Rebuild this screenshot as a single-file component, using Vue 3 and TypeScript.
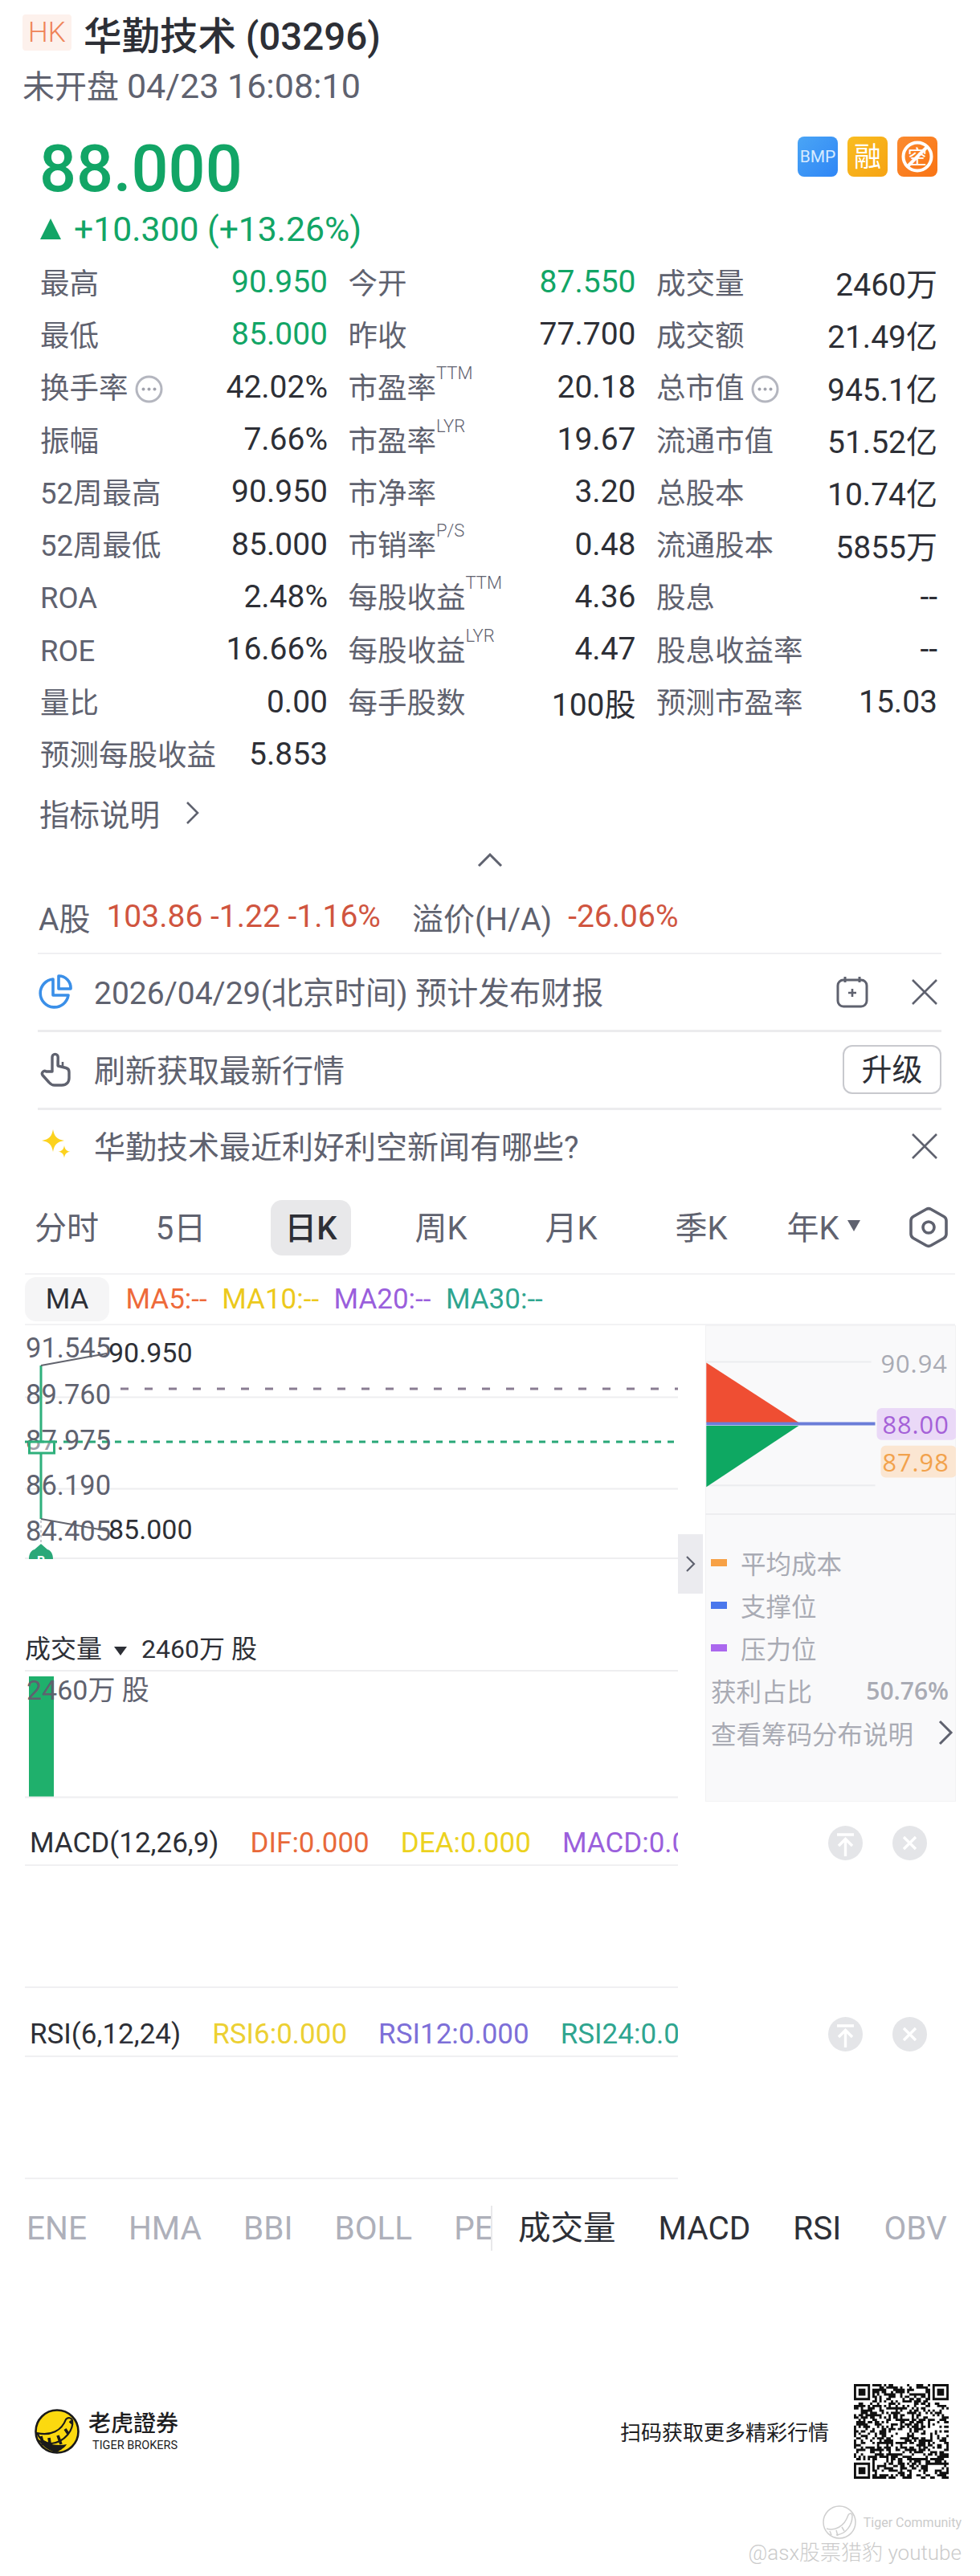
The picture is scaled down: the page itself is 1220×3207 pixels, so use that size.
<script setup lang="ts">
interface Cell {
  label: string;
  value: string;
  sup?: string;
  more?: boolean;
  tone?: 'up';
}

const cells: Cell[] = [
  { label: '最高', value: '90.950', tone: 'up' },
  { label: '今开', value: '87.550', tone: 'up' },
  { label: '成交量', value: '2460万' },
  { label: '最低', value: '85.000', tone: 'up' },
  { label: '昨收', value: '77.700' },
  { label: '成交额', value: '21.49亿' },
  { label: '换手率', value: '42.02%', more: true },
  { label: '市盈率', value: '20.18', sup: 'TTM' },
  { label: '总市值', value: '945.1亿', more: true },
  { label: '振幅', value: '7.66%' },
  { label: '市盈率', value: '19.67', sup: 'LYR' },
  { label: '流通市值', value: '51.52亿' },
  { label: '52周最高', value: '90.950' },
  { label: '市净率', value: '3.20' },
  { label: '总股本', value: '10.74亿' },
  { label: '52周最低', value: '85.000' },
  { label: '市销率', value: '0.48', sup: 'P/S' },
  { label: '流通股本', value: '5855万' },
  { label: 'ROA', value: '2.48%' },
  { label: '每股收益', value: '4.36', sup: 'TTM' },
  { label: '股息', value: '--' },
  { label: 'ROE', value: '16.66%' },
  { label: '每股收益', value: '4.47', sup: 'LYR' },
  { label: '股息收益率', value: '--' },
  { label: '量比', value: '0.00' },
  { label: '每手股数', value: '100股' },
  { label: '预测市盈率', value: '15.03' },
  { label: '预测每股收益', value: '5.853' },
];

const periods = ['分时', '5日', '日K', '周K', '月K', '季K'];
const maItems = [
  { text: 'MA5:--', color: '#ee6a3a' },
  { text: 'MA10:--', color: '#ecc91c' },
  { text: 'MA20:--', color: '#9a5fdc' },
  { text: 'MA30:--', color: '#2fa58f' },
];
const axis = [
  { text: '91.545', y: 1677 },
  { text: '89.760', y: 1735 },
  { text: '87.975', y: 1792 },
  { text: '86.190', y: 1848 },
  { text: '84.405', y: 1905 },
];
const legend = [
  { text: '平均成本', color: '#f7a145' },
  { text: '支撑位', color: '#4a78ec' },
  { text: '压力位', color: '#ab68ee' },
];
const indicators = [
  {
    name: 'MACD(12,26,9)',
    items: [
      { text: 'DIF:0.000', color: '#e8693a' },
      { text: 'DEA:0.000', color: '#ecd21f' },
      { text: 'MACD:0.000', color: '#9a5fdc' },
    ],
  },
  {
    name: 'RSI(6,12,24)',
    items: [
      { text: 'RSI6:0.000', color: '#ecd033' },
      { text: 'RSI12:0.000', color: '#7d6fd8' },
      { text: 'RSI24:0.000', color: '#2fa58f' },
    ],
  },
];
const moreTabs = ['ENE', 'HMA', 'BBI', 'BOLL', 'PE'];

// the QR only has to look like one, so modules come from a small LFSR
function buildQr(): string {
  const size = 41;
  let seed = 0x5a3c;
  let d = '';
  const inFinder = (x: number, y: number) =>
    (x < 8 && y < 8) || (x >= size - 8 && y < 8) || (x < 8 && y >= size - 8);
  for (let y = 0; y < size; y++) {
    for (let x = 0; x < size; x++) {
      seed = ((seed >> 1) ^ (seed & 1 ? 0xb400 : 0)) & 0xffff;
      if (!inFinder(x, y) && seed % 100 < 52) d += `M${x} ${y}h1v1h-1z`;
    }
  }
  for (const [fx, fy] of [[0, 0], [size - 7, 0], [0, size - 7]]) {
    d += `M${fx} ${fy}h7v7h-7zM${fx + 1} ${fy + 1}v5h5v-5zM${fx + 2} ${fy + 2}h3v3h-3z`;
  }
  return d;
}
const qrPath = buildQr();
</script>

<template>
  <div class="page">
    <header class="head">
      <div class="title-row">
        <span class="market">HK</span>
        <h1 class="name">华勤技术 (03296)</h1>
      </div>
      <div class="status">未开盘 <span class="status-time">04/23 16:08:10</span></div>
    </header>

    <section class="quote">
      <div class="price-row">
        <span class="price">88.000</span>
        <div class="badges">
          <span class="badge badge-blue">BMP</span>
          <span class="badge badge-yellow">融</span>
          <span class="badge badge-orange">
            <svg viewBox="0 0 50 50" width="50" height="50">
              <text x="25" y="34" text-anchor="middle" font-size="24" fill="#fff">空</text>
              <circle cx="25" cy="25" r="17.5" fill="none" stroke="#fff" stroke-width="4" />
              <path d="M13 37 37 13" stroke="#fff" stroke-width="4" />
            </svg>
          </span>
        </div>
      </div>
      <div class="change"><i class="up-arrow"></i>+10.300 (+13.26%)</div>
    </section>

    <section class="stats">
      <div v-for="(c, i) in cells" :key="i" class="cell">
        <span class="cell-label">
          {{ c.label }}<sup v-if="c.sup">{{ c.sup }}</sup>
          <svg v-if="c.more" class="more" viewBox="0 0 35 35" width="35" height="35">
            <circle cx="17.5" cy="17.5" r="15.5" fill="none" stroke="#b4b6bf" stroke-width="3" />
            <circle cx="10.5" cy="17.5" r="2" fill="#a0a2ac" />
            <circle cx="17.5" cy="17.5" r="2" fill="#a0a2ac" />
            <circle cx="24.5" cy="17.5" r="2" fill="#a0a2ac" />
          </svg>
        </span>
        <span class="cell-value" :class="{ up: c.tone === 'up' }">{{ c.value }}</span>
      </div>
    </section>

    <div class="explain">
      指标说明
      <svg viewBox="0 0 18 30" width="18" height="30">
        <path d="M2 2l13 13L2 28" fill="none" stroke="#5f626f" stroke-width="2.6" />
      </svg>
    </div>
    <div class="fold">
      <svg viewBox="0 0 32 18" width="32" height="18">
        <path d="M2 16 16 2l14 14" fill="none" stroke="#5f626f" stroke-width="3" />
      </svg>
    </div>

    <div class="ah">
      <span class="ah-label">A股</span>
      <span class="ah-num">103.86 -1.22 -1.16%</span>
      <span class="ah-label ah-prem">溢价(H/A)</span>
      <span class="ah-num">-26.06%</span>
    </div>

    <div class="notices">
      <div class="notice">
        <svg class="n-icon" viewBox="0 0 42 43" width="42" height="43">
          <path d="M18 6A17.5 17.5 0 1 0 37 26H18z" fill="none" stroke="#3a8fe8" stroke-width="3.6" stroke-linejoin="round" />
          <path d="M25 2a15 15 0 0 1 15 16H25z" fill="none" stroke="#3a8fe8" stroke-width="3.6" stroke-linejoin="round" />
        </svg>
        <span class="n-text">2026/04/29(北京时间) 预计发布财报</span>
        <svg class="n-cal" viewBox="0 0 40 40" width="40" height="40">
          <rect x="2" y="5" width="36" height="33" rx="7" fill="none" stroke="#5f626f" stroke-width="3" />
          <path d="M11 1v7M29 1v7" stroke="#5f626f" stroke-width="3" />
          <path d="M20 16v10M15 21h10" stroke="#5f626f" stroke-width="2.6" />
        </svg>
        <svg class="n-close" viewBox="0 0 32 32" width="32" height="32">
          <path d="M1 1l30 30M31 1 1 31" stroke="#5f626f" stroke-width="2.6" />
        </svg>
      </div>
      <div class="notice">
        <svg class="n-icon" viewBox="0 0 42 43" width="42" height="43">
          <path
            d="M17 24V6a3.6 3.6 0 0 1 7.2 0v11l10 2.5c2.500.7 3.800 2.600 3.800 5V32c0 5.500-3.500 9-9 9h-9c-3 0-5-1-7-3.500L5 28.500c-2-3 1.500-6.500 4.500-4.500z"
            fill="none"
            stroke="#5f626f"
            stroke-width="3.4"
            stroke-linejoin="round"
          />
          <path d="M24 10v7M30 12v6" stroke="#5f626f" stroke-width="2.6" />
        </svg>
        <span class="n-text">刷新获取最新行情</span>
        <button class="upgrade">升级</button>
      </div>
      <div class="notice notice-last">
        <svg class="n-icon" viewBox="0 0 42 43" width="42" height="43">
          <path d="M18 1c1.500 9 5 12.500 14 14-9 1.500-12.500 5-14 14-1.500-9-5-12.500-14-14 9-1.500 12.500-5 14-14z" fill="#fcd21e" />
          <path d="M32 21c.8 5 2.800 7 7.500 7.800-4.700.8-6.700 2.800-7.500 7.700-.8-4.900-2.800-6.900-7.500-7.700 4.700-.8 6.700-2.800 7.500-7.800z" fill="#fcd21e" />
        </svg>
        <span class="n-text">华勤技术最近利好利空新闻有哪些?</span>
        <svg class="n-close" viewBox="0 0 32 32" width="32" height="32">
          <path d="M1 1l30 30M31 1 1 31" stroke="#5f626f" stroke-width="2.6" />
        </svg>
      </div>
    </div>

    <nav class="periods">
      <span v-for="p in periods" :key="p" class="period" :class="{ active: p === '日K' }">{{ p }}</span>
      <span class="period period-year">年K<i class="caret"></i></span>
      <svg class="gear" viewBox="0 0 50 52" width="50" height="52">
        <path
          d="M22 3.500a6 6 0 0 1 6 0l16 9a6 6 0 0 1 3 5.200v16.600a6 6 0 0 1-3 5.200l-16 9a6 6 0 0 1-6 0l-16-9a6 6 0 0 1-3-5.200V17.700a6 6 0 0 1 3-5.200z"
          fill="none"
          stroke="#5f626f"
          stroke-width="3.6"
        />
        <circle cx="25" cy="26" r="7" fill="none" stroke="#5f626f" stroke-width="3.6" />
      </svg>
    </nav>

    <div class="ma-bar">
      <span class="ma-pill">MA</span>
      <span v-for="m in maItems" :key="m.text" :style="{ color: m.color }">{{ m.text }}</span>
    </div>

    <section class="chart-area">
      <div class="chart-main">
        <svg class="kline" viewBox="31 1649 813 291" width="813" height="291">
          <path d="M31 1738.500h813M31 1852.500h813M31 1939h813" stroke="#eeeef0" stroke-width="2" />
          <path d="M150 1728H844" stroke="#8a7d92" stroke-width="3" stroke-dasharray="10 20" />
          <path d="M31 1794H844" stroke="#2aa878" stroke-width="3" stroke-dasharray="8 8" />
          <text v-for="a in axis" :key="a.text" x="32" :y="a.y" class="axis-text">{{ a.text }}</text>
          <path d="M51 1699V1793M51 1809V1890" stroke="#2fb07c" stroke-width="3" fill="none" />
          <rect x="36.500" y="1794" width="31" height="14" fill="#fff" fill-opacity="0.4" stroke="#2fb07c" stroke-width="3" />
          <path d="M51 1699l82-15M51 1890l84 15" stroke="#62646e" stroke-width="2" fill="none" />
          <text x="135" y="1683" class="mark-text">90.950</text>
          <text x="135" y="1903" class="mark-text">85.000</text>
          <path d="M51 1892v28" stroke="#b9bbc2" stroke-width="1.500" stroke-dasharray="3 3" />
          <path d="M51 1921l8 7c4 1 7 5 7 12H36c0-7 3-11 7-12z" fill="#2aa878" />
          <text x="51" y="1948" text-anchor="middle" font-size="16" font-weight="700" fill="#fff">B</text>
        </svg>
        <div class="vol-head">
          成交量<i class="vol-caret"></i><span>2460万 股</span>
        </div>
        <svg class="vol" viewBox="31 2080 813 158" width="813" height="158">
          <rect x="36" y="2086" width="31" height="151" fill="#1fb06c" />
          <path d="M31 2236.500h813" stroke="#eeeef0" stroke-width="2" />
          <text x="33" y="2103" class="vol-text">2460万 股</text>
        </svg>
      </div>

      <aside class="panel">
        <svg class="cost" viewBox="878 1649 312 236" width="312" height="236">
          <path d="M878 1695h207M878 1850h212" stroke="#ecedef" stroke-width="2" />
          <path d="M878 1696v75h116z" fill="#ef4e33" />
          <path d="M878 1775v77l116-77z" fill="#0ea862" />
          <path d="M878 1772.500H1090" stroke="#6b7dd8" stroke-width="4" />
          <text x="1097" y="1696" class="cost-text" fill="#a9abb4">90.94</text>
          <rect x="1092" y="1753" width="100" height="40" rx="6" fill="#ead9f7" />
          <text x="1183" y="1773" text-anchor="end" class="cost-text" fill="#a561d8">88.00</text>
          <rect x="1097" y="1800" width="95" height="40" rx="6" fill="#fbe6d2" />
          <text x="1183" y="1820" text-anchor="end" class="cost-text" fill="#f2a24c">87.98</text>
        </svg>
        <div class="panel-body">
          <div v-for="l in legend" :key="l.text" class="legend-row">
            <i :style="{ background: l.color }"></i>{{ l.text }}
          </div>
          <div class="profit"><span>获利占比</span><b>50.76%</b></div>
          <div class="panel-link">
            查看筹码分布说明
            <svg viewBox="0 0 19 32" width="19" height="32">
              <path d="M2 2l14 14L2 30" fill="none" stroke="#5f626f" stroke-width="3" />
            </svg>
          </div>
        </div>
      </aside>

      <div class="panel-toggle">
        <svg viewBox="0 0 14 22" width="14" height="22">
          <path d="M2 2l9 9-9 9" fill="none" stroke="#5f626f" stroke-width="2.2" />
        </svg>
      </div>
    </section>

    <section v-for="ind in indicators" :key="ind.name" class="indicator">
      <div class="ind-pane">
        <div class="ind-head">
          <span class="ind-name">{{ ind.name }}</span>
          <span v-for="it in ind.items" :key="it.text" :style="{ color: it.color }">{{ it.text }}</span>
        </div>
      </div>
      <div class="ind-actions">
        <svg viewBox="0 0 43 43" width="43" height="43">
          <circle cx="21.500" cy="21.500" r="21.500" fill="#e4e5e8" />
          <path d="M11 11h21M21.500 38V17M13 25l8.500-8.500L30 25" fill="none" stroke="#fff" stroke-width="3.400" />
        </svg>
        <svg viewBox="0 0 43 43" width="43" height="43">
          <circle cx="21.500" cy="21.500" r="21.500" fill="#e4e5e8" />
          <path d="M14 14l15 15M29 14 14 29" stroke="#fff" stroke-width="3.400" />
        </svg>
      </div>
    </section>

    <div class="bottom-tabs">
      <div class="more-tabs">
        <span v-for="t in moreTabs" :key="t">{{ t }}</span>
      </div>
      <div class="main-tabs">
        <span class="on">成交量</span>
        <span class="on">MACD</span>
        <span class="on">RSI</span>
        <span>OBV</span>
      </div>
    </div>

    <footer class="foot">
      <div class="brand">
        <svg viewBox="0 0 56 56" width="56" height="56">
          <circle cx="28" cy="28" r="26.500" fill="#fbd90f" stroke="#1a1a1a" stroke-width="2.600" />
          <path d="M3 37c6 8 14 16 25 17 6-4 10-6 12-10-12 3-26-1-37-7z" fill="#1a1a1a" />
          <path d="M3 30c17 4 31-3 36-17 3-3 7-2 8 1 2 12-9 27-26 29-7 0-13-3-18-13z" fill="#fbd90f" stroke="#1a1a1a" stroke-width="2.200" />
          <path d="M8 34l3 11M18 36l2 13M29 33l4 11M38 25l4 6M44 15l3 3" stroke="#1a1a1a" stroke-width="3.600" />
        </svg>
        <div class="brand-text">
          <span class="brand-cn">老虎證券</span>
          <span class="brand-en">TIGER BROKERS</span>
        </div>
      </div>
      <div class="scan">
        <span>扫码获取更多精彩行情</span>
        <svg viewBox="0 0 41 41" width="120" height="118">
          <path :d="qrPath" fill="#111" fill-rule="evenodd" />
        </svg>
      </div>
    </footer>

    <div class="watermark">
      <div class="wm-top">
        <svg viewBox="0 0 44 44" width="44" height="44">
          <circle cx="22" cy="22" r="20" fill="none" stroke="#cfcfcf" stroke-width="1.500" />
          <path d="M6 30c10 3 22-2 27-17 2-3 5-2 5 1 0 12-8 23-20 24" fill="none" stroke="#cfcfcf" stroke-width="1.500" />
          <path d="M10 33l2 5M18 32l2 7M25 28l3 5" stroke="#cfcfcf" stroke-width="1.500" />
        </svg>
        <span>Tiger Community</span>
      </div>
      <div class="wm-bottom">@asx股票猎豹 youtube</div>
    </div>
  </div>
</template>

<style>
html,
body {
  margin: 0;
  background: #fff;
}
</style>

<style scoped>
* {
  box-sizing: border-box;
}
.page {
  position: relative;
  width: 1220px;
  height: 3207px;
  overflow: hidden;
  background: #fff;
  color: #2d2f36;
  font-family: Roboto, "Noto Sans CJK SC", sans-serif;
}
.head {
  padding: 18px 28px 0;
}
.title-row {
  display: flex;
  align-items: flex-start;
  height: 45px;
}
.market {
  width: 61px;
  height: 45px;
  margin-right: 15px;
  border-radius: 4px;
  background: #fdf1ec;
  color: #ef8458;
  font-size: 35px;
  font-weight: 300;
  line-height: 45px;
  text-align: center;
}
.name {
  margin: 2px 0 0;
  font-size: 47.500px;
  font-weight: 500;
  line-height: 52px;
  white-space: nowrap;
}
.status {
  height: 44px;
  margin-top: 22px;
  color: #5f626f;
  font-size: 40px;
  line-height: 44px;
  white-space: nowrap;
}
.status-time {
  font-size: 43px;
}
.quote {
  padding: 0 53px 0 49px;
  margin-top: 34px;
}
.price-row {
  display: flex;
  align-items: flex-start;
  justify-content: space-between;
  height: 92px;
}
.price {
  margin-top: 2px;
  color: #12a566;
  font-size: 81px;
  font-weight: 500;
  line-height: 92px;
}
.badges {
  display: flex;
  gap: 12px;
  margin-top: 7px;
}
.badge {
  width: 50px;
  height: 50px;
  border-radius: 8px;
  color: #fff;
  line-height: 50px;
  text-align: center;
}
.badge-blue {
  background: linear-gradient(135deg, #4aa5f5, #2f86f6);
  color: #d6ebff;
  font-size: 21px;
}
.badge-yellow {
  background: linear-gradient(135deg, #f9bd21, #f6a313);
  font-size: 34px;
}
.badge-orange {
  background: linear-gradient(135deg, #fb8a2f, #f97414);
}
.change {
  display: flex;
  align-items: center;
  height: 50px;
  margin-top: 5px;
  padding-left: 1px;
  color: #12a566;
  font-size: 42.700px;
  white-space: nowrap;
}
.up-arrow {
  width: 0;
  height: 0;
  margin-right: 16px;
  border-right: 13.500px solid transparent;
  border-bottom: 26px solid #12a566;
  border-left: 13.500px solid transparent;
}
.stats {
  display: grid;
  grid-template-columns: 358px 358px 350px;
  grid-auto-rows: 65.300px;
  column-gap: 25.500px;
  margin-top: 9.500px;
  padding-left: 50px;
}
.cell {
  display: flex;
  align-items: center;
  justify-content: space-between;
  white-space: nowrap;
}
.cell-label {
  display: flex;
  align-items: center;
  padding-top: 3px;
  color: #5f626f;
  font-size: 36.500px;
  line-height: 44px;
}
.cell-label sup {
  margin-top: -38px;
  font-size: 22px;
  font-weight: 300;
  line-height: 24px;
}
.more {
  margin-left: 8px;
}
.cell-value {
  padding-bottom: 2px;
  font-size: 39px;
}
.cell-value.up {
  color: #12a566;
}
.explain {
  display: flex;
  align-items: center;
  gap: 32px;
  height: 50px;
  margin-top: 14.500px;
  padding-left: 49px;
  color: #5f626f;
  font-size: 37.500px;
}
.fold {
  display: flex;
  justify-content: center;
  height: 18px;
  margin-top: 25px;
}
.ah {
  display: flex;
  align-items: center;
  height: 50px;
  margin-top: 36px;
  padding-left: 48px;
  font-size: 39px;
  white-space: nowrap;
}
.ah-label {
  margin-right: 20px;
  color: #5f626f;
}
.ah-num {
  color: #d0553f;
}
.ah-prem {
  margin-left: 39px;
  margin-right: 20px;
}
.notices {
  margin: 20px 48px 0 47px;
  border-top: 2px solid #f0f0f2;
}
.notice {
  display: flex;
  align-items: center;
  height: 97px;
  padding-left: 1px;
  border-bottom: 3px solid #ececee;
}
.notice-last {
  height: 90px;
  border-bottom: 0;
}
.n-icon {
  flex: none;
  margin-right: 27px;
}
.n-text {
  flex: 1;
  padding-bottom: 3px;
  color: #5f626f;
  font-size: 39px;
  white-space: nowrap;
}
.n-cal {
  margin-right: 54px;
}
.n-close {
  margin-right: 5px;
}
.upgrade {
  width: 123px;
  height: 61px;
  padding: 0;
  border: 2px solid #c8c9ce;
  border-radius: 12px;
  background: #fff;
  color: #2d2f36;
  font: inherit;
  font-size: 38px;
  line-height: 56px;
}
.periods {
  display: flex;
  align-items: center;
  gap: 62px;
  height: 69px;
  margin-top: 22px;
  padding-left: 33px;
}
.period {
  flex: none;
  width: 100px;
  height: 69px;
  border-radius: 14px;
  color: #5f626f;
  font-size: 40px;
  line-height: 72px;
  text-align: center;
}
.period:first-child {
  margin-right: -20px;
}
.period.active {
  background: #e8e8ea;
  color: #2d2f36;
  font-weight: 500;
}
.period-year {
  margin-left: -10px;
  white-space: nowrap;
}
.caret {
  display: inline-block;
  margin-left: 10px;
  vertical-align: 10px;
  border-top: 14px solid #5f626f;
  border-right: 8px solid transparent;
  border-left: 8px solid transparent;
}
.gear {
  flex: none;
  margin-left: -6px;
}
.ma-bar {
  display: flex;
  align-items: center;
  gap: 18.500px;
  height: 65px;
  margin: 22px 31px 0;
  border-top: 2px solid #f2f2f4;
  border-bottom: 2px solid #f2f2f4;
  font-size: 35px;
  white-space: nowrap;
}
.ma-pill {
  width: 105px;
  height: 55px;
  margin-right: 2px;
  border-radius: 14px;
  background: #f5f5f6;
  color: #2d2f36;
  line-height: 56px;
  text-align: center;
}
.chart-area {
  position: relative;
  display: flex;
  gap: 34px;
  padding-left: 31px;
}
.chart-main {
  width: 813px;
}
.kline,
.vol,
.cost {
  display: block;
}
.axis-text {
  fill: #5f626f;
  font-size: 34.500px;
  dominant-baseline: central;
}
.mark-text {
  fill: #2d2f36;
  font-size: 34px;
  dominant-baseline: central;
}
.vol-head {
  display: flex;
  align-items: flex-end;
  height: 140px;
  padding-bottom: 2px;
  border-bottom: 2px solid #eeeef0;
  font-size: 32px;
  line-height: 48px;
  white-space: nowrap;
}
.vol-caret {
  margin: 0 18px 16px 15px;
  border-top: 11px solid #2d2f36;
  border-right: 8px solid transparent;
  border-left: 8px solid transparent;
}
.vol-text {
  fill: #5f626f;
  font-size: 34px;
  dominant-baseline: central;
}
.panel {
  width: 312px;
  height: 593px;
  background: #f9f9fa;
  border: 1px solid #f2f2f3;
}
.cost {
  margin: -1px;
  border-bottom: 2px solid #eeeef0;
}
.cost-text {
  font-family: "Open Sans", sans-serif;
  font-size: 31px;
  letter-spacing: 1px;
  dominant-baseline: central;
}
.panel-body {
  padding: 34px 8px 0 6px;
  color: #a9abb4;
  font-size: 31.500px;
}
.legend-row,
.profit,
.panel-link {
  display: flex;
  align-items: center;
  height: 53px;
  white-space: nowrap;
}
.legend-row i {
  width: 20px;
  height: 9px;
  margin-right: 17px;
}
.profit {
  justify-content: space-between;
}
.profit b {
  font-family: "Open Sans", sans-serif;
  font-size: 30px;
  font-weight: 600;
}
.panel-link {
  justify-content: space-between;
  margin-right: -6px;
}
.panel-toggle {
  position: absolute;
  top: 260px;
  left: 844px;
  display: flex;
  align-items: center;
  justify-content: center;
  width: 31px;
  height: 74px;
  background: #ebebef;
}
.indicator {
  position: relative;
  display: flex;
  height: 232px;
  padding-left: 31px;
}
.indicator + .indicator {
  height: 238px;
}
.ind-pane {
  width: 813px;
  border-bottom: 2px solid #f0f0f2;
}
.ind-head {
  display: flex;
  align-items: flex-end;
  gap: 39px;
  height: 80px;
  overflow: hidden;
  padding-left: 6px;
  padding-bottom: 1px;
  border-bottom: 2px solid #f0f0f2;
  font-size: 35px;
  line-height: 50px;
  white-space: nowrap;
}
.indicator + .indicator .ind-head {
  height: 86px;
}
.ind-name {
  color: #2d2f36;
}
.ind-actions {
  display: flex;
  gap: 37px;
  margin: 30px 0 0 187px;
}
.indicator + .indicator .ind-actions {
  margin-top: 36px;
}
.bottom-tabs {
  display: flex;
  height: 56px;
  margin-top: 33px;
  font-size: 40.500px;
  line-height: 57px;
  white-space: nowrap;
}
.more-tabs {
  display: flex;
  gap: 52px;
  width: 613px;
  padding-left: 33px;
  overflow: hidden;
  border-right: 2px solid #e8e8ea;
  color: #aeb0ba;
}
.main-tabs {
  display: flex;
  gap: 53px;
  padding-left: 32px;
  color: #aeb0ba;
}
.main-tabs .on {
  color: #2d2f36;
}
.foot {
  display: flex;
  align-items: center;
  justify-content: space-between;
  margin-top: 166px;
  padding: 0 38px 0 43px;
}
.brand {
  display: flex;
  align-items: center;
  gap: 11px;
}
.brand-text {
  display: flex;
  flex-direction: column;
  color: #1d1d1f;
}
.brand-cn {
  font-size: 28px;
  font-weight: 500;
  line-height: 36px;
}
.brand-en {
  margin-left: 5px;
  font-size: 14.500px;
  line-height: 18px;
}
.scan {
  display: flex;
  align-items: center;
  gap: 30px;
  color: #1d1d1f;
  font-size: 26px;
}
.scan svg {
  display: block;
}
.watermark {
  position: absolute;
  right: 23px;
  bottom: 10px;
  color: #cbcbcb;
  text-align: right;
}
.wm-top {
  display: flex;
  align-items: center;
  justify-content: flex-end;
  gap: 8px;
  font-size: 16px;
}
.wm-bottom {
  margin-top: -3px;
  font-size: 26px;
  font-weight: 300;
  line-height: 38px;
  white-space: nowrap;
}
</style>
